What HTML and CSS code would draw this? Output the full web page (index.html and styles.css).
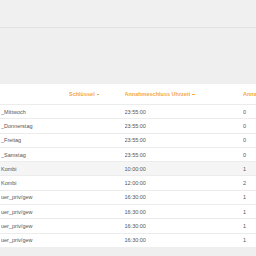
FILE: index.html
```html
<!DOCTYPE html>
<html lang="de">
<head>
<meta charset="utf-8">
<link rel="stylesheet" href="styles.css">
</head>
<body>
<div class="topbar"></div>
<div class="panel">
  <div class="row head">
    <div class="cell"></div>
    <div class="cell">Schlüssel<span class="caret"></span></div>
    <div class="cell">Annahmeschluss Uhrzeit<span class="caret"></span></div>
    <div class="cell">Annahmeschluss Tage</div>
  </div>
  <div class="row"><div class="cell">_Mittwoch</div><div class="cell"></div><div class="cell">23:55:00</div><div class="cell">0</div></div>
  <div class="row"><div class="cell">_Donnerstag</div><div class="cell"></div><div class="cell">23:55:00</div><div class="cell">0</div></div>
  <div class="row"><div class="cell">_Freitag</div><div class="cell"></div><div class="cell">23:55:00</div><div class="cell">0</div></div>
  <div class="row"><div class="cell">_Samstag</div><div class="cell"></div><div class="cell">23:55:00</div><div class="cell">0</div></div>
  <div class="row hover"><div class="cell">Kombi</div><div class="cell"></div><div class="cell">10:00:00</div><div class="cell">1</div></div>
  <div class="row"><div class="cell">Kombi</div><div class="cell"></div><div class="cell">12:00:00</div><div class="cell">2</div></div>
  <div class="row"><div class="cell">uer_priv/gew</div><div class="cell"></div><div class="cell">16:30:00</div><div class="cell">1</div></div>
  <div class="row"><div class="cell">uer_priv/gew</div><div class="cell"></div><div class="cell">16:30:00</div><div class="cell">1</div></div>
  <div class="row"><div class="cell">uer_priv/gew</div><div class="cell"></div><div class="cell">16:30:00</div><div class="cell">1</div></div>
  <div class="row"><div class="cell">uer_priv/gew</div><div class="cell"></div><div class="cell">16:30:00</div><div class="cell">1</div></div>
</div>
</body>
</html>
```
FILE: styles.css
```css
html, body {
  margin: 0;
  padding: 0;
  background: #efefef;
  font-family: "Liberation Sans", Arial, sans-serif;
  font-size: 5.5px;
  color: #555;
  overflow: hidden;
}
.topbar {
  height: 27px;
  border-bottom: 1px solid #e2e2e2;
  background: #f0f0f0;
}
.panel {
  margin-top: 56px;
  background: #fff;
  width: 100%;
}
.row {
  display: grid;
  grid-template-columns: 68px 55.5px 118.5px 1fr;
  padding-left: 1px;
  height: 14.3px;
  align-items: center;
  border-top: 1px solid #ececec;
  box-sizing: border-box;
  white-space: nowrap;
}
.row.head {
  height: 20px;
  border-top: none;
  color: #f6a83c;
  font-weight: bold;
}
.row.hover {
  background: #f5f5f5;
}
.cell {
  overflow: hidden;
  display: flex;
  align-items: center;
}
.caret {
  display: inline-block;
  width: 2.5px;
  height: 1px;
  background: #f6a83c;
  margin-left: 2px;
  margin-top: 1px;
}
```
